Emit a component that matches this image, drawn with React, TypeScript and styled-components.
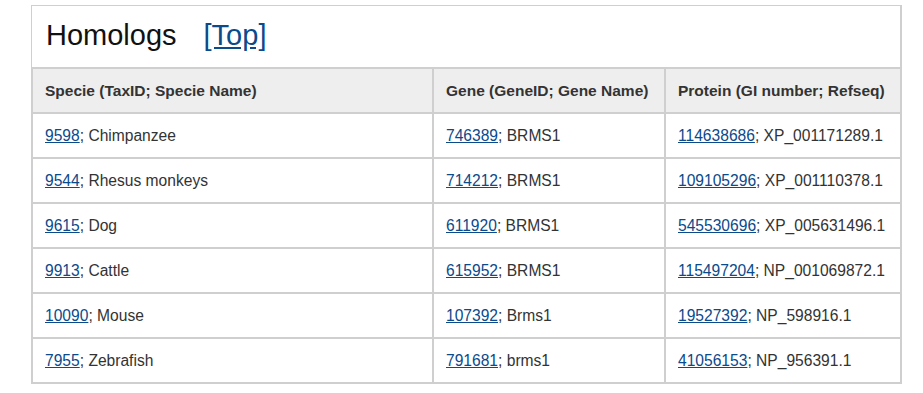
import React from "react";
import styled, { createGlobalStyle } from "styled-components";

interface Homolog {
  taxId: string;
  specie: string;
  geneId: string;
  gene: string;
  gi: string;
  refseq: string;
}

const homologs: Homolog[] = [
  { taxId: "9598", specie: "Chimpanzee", geneId: "746389", gene: "BRMS1", gi: "114638686", refseq: "XP_001171289.1" },
  { taxId: "9544", specie: "Rhesus monkeys", geneId: "714212", gene: "BRMS1", gi: "109105296", refseq: "XP_001110378.1" },
  { taxId: "9615", specie: "Dog", geneId: "611920", gene: "BRMS1", gi: "545530696", refseq: "XP_005631496.1" },
  { taxId: "9913", specie: "Cattle", geneId: "615952", gene: "BRMS1", gi: "115497204", refseq: "NP_001069872.1" },
  { taxId: "10090", specie: "Mouse", geneId: "107392", gene: "Brms1", gi: "19527392", refseq: "NP_598916.1" },
  { taxId: "7955", specie: "Zebrafish", geneId: "791681", gene: "brms1", gi: "41056153", refseq: "NP_956391.1" },
];

export default function App() {
  return (
    <>
      <GlobalStyle />
      <Panel>
        <Title>
          Homologs
          <TopLink href="#top">[Top]</TopLink>
        </Title>
        <Table>
          <colgroup>
            <col style={{ width: 401 }} />
            <col style={{ width: 232 }} />
            <col />
          </colgroup>
          <thead>
            <tr>
              <Th>Specie (TaxID; Specie Name)</Th>
              <Th>Gene (GeneID; Gene Name)</Th>
              <Th>Protein (GI number; Refseq)</Th>
            </tr>
          </thead>
          <tbody>
            {homologs.map((h) => (
              <tr key={h.taxId}>
                <Td>
                  <CellLink href="#">{h.taxId}</CellLink>; {h.specie}
                </Td>
                <Td>
                  <CellLink href="#">{h.geneId}</CellLink>; {h.gene}
                </Td>
                <Td>
                  <CellLink href="#">{h.gi}</CellLink>; {h.refseq}
                </Td>
              </tr>
            ))}
          </tbody>
        </Table>
      </Panel>
    </>
  );
}

const GlobalStyle = createGlobalStyle`
  body {
    margin: 0;
    background: #fff;
    font-family: "Liberation Sans", Arial, sans-serif;
    color: #333;
  }
`;

const Panel = styled.div`
  box-sizing: border-box;
  width: 871px;
  margin: 5px 0 0 31px;
  border-top: 1px solid #cfcfcf;
  border-left: 1px solid #cfcfcf;
  border-right: 2px solid #cfcfcf;
`;

const Title = styled.h2`
  margin: 0;
  height: 61px;
  padding: 12px 0 0 14px;
  box-sizing: border-box;
  font-size: 29px;
  font-weight: normal;
  color: #111;
  line-height: 34px;
`;

const TopLink = styled.a`
  margin-left: 27px;
  color: #0b4a8b;
  text-decoration: underline;
`;

const Table = styled.table`
  border-collapse: collapse;
  table-layout: fixed;
  margin-left: -1px;
  width: calc(100% + 1px);
`;

const Th = styled.th`
  height: 43px;
  padding: 0 12px;
  text-align: left;
  font-size: 15.5px;
  font-weight: bold;
  color: #333;
  background: #eeeeee;
  border: 2px solid #cfcfcf;

  &:last-child {
    border-right: none;
  }
`;

const Td = styled.td`
  height: 43px;
  padding: 0 12px;
  font-size: 15.6px;
  color: #333;
  border: 2px solid #cfcfcf;

  &:last-child {
    border-right: none;
  }
`;

const CellLink = styled.a`
  color: #0b4a8b;
  text-decoration: underline;
`;
